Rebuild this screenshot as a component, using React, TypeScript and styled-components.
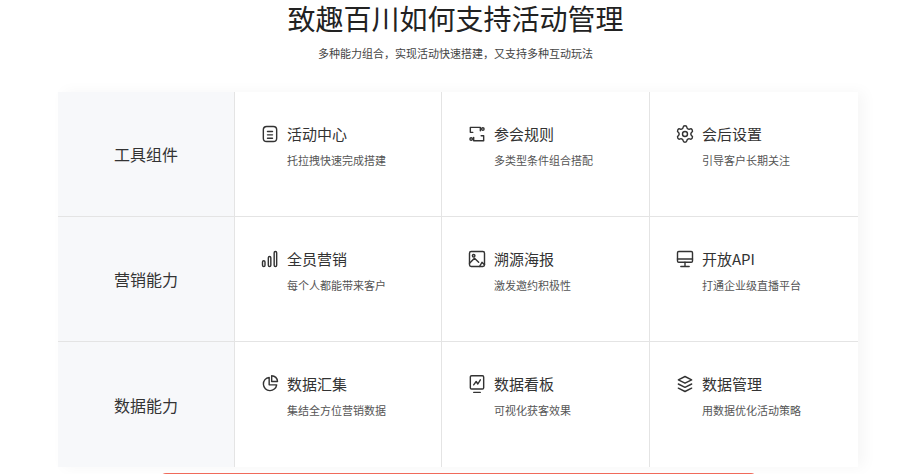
import styled, { createGlobalStyle } from "styled-components"
import { Settings } from "lucide-react"

const Global = createGlobalStyle`
  body { margin: 0; background: #fff; font-family: "Noto Sans CJK SC", "Noto Sans", sans-serif; }
`

const Ico = ({ children }: { children: React.ReactNode }) => (
  <svg width="20" height="20" viewBox="0 0 24 24" fill="none" stroke="#333" strokeWidth="1.7" strokeLinecap="round" strokeLinejoin="round">
    {children}
  </svg>
)

const icons: Record<string, React.ReactNode> = {
  doc: <Ico><rect x="4" y="3" width="16" height="18" rx="4" /><path d="M9 9h6M9 13h6M9 17h6" /></Ico>,
  rule: <Ico><path d="M8 4H4v6h3M16 20h4v-6h-3M8 4h8v4M16 20H8v-4" /><circle cx="19" cy="6" r="1.5" /><circle cx="5" cy="18" r="1.5" /></Ico>,
  gear: <Settings size={20} color="#333" strokeWidth={1.7} />,
  bars: <Ico><rect x="3" y="14" width="3" height="7" rx="1.5" /><rect x="10" y="9" width="3" height="12" rx="1.5" /><rect x="17" y="3" width="3" height="18" rx="1.5" /></Ico>,
  poster: <Ico><rect x="3" y="3" width="18" height="18" rx="2" /><circle cx="8" cy="8" r="1.5" /><path d="M3 17l6-6 5 5M15 21l3-5 3 3" /></Ico>,
  api: <Ico><rect x="3" y="3" width="18" height="13" rx="1.5" /><path d="M3 12h18M12 16v5M7 21h10" /></Ico>,
  pie: <Ico><path d="M11 4a8 8 0 1 0 9 9h-9z" /><path d="M14 2v7h7a7 7 0 0 0-7-7z" /></Ico>,
  board: <Ico><rect x="4" y="2" width="16" height="16" rx="1.5" /><path d="M8 13l3-4 2 3 3-5M8 22h8" /></Ico>,
  layers: <Ico><path d="M12 3l8 4-8 4-8-4z" /><path d="M4 12l8 4 8-4M4 17l8 4 8-4" /></Ico>,
}

const rows = [
  { name: "工具组件", items: [["doc", "活动中心", "托拉拽快速完成搭建"], ["rule", "参会规则", "多类型条件组合搭配"], ["gear", "会后设置", "引导客户长期关注"]] },
  { name: "营销能力", items: [["bars", "全员营销", "每个人都能带来客户"], ["poster", "溯源海报", "激发邀约积极性"], ["api", "开放API", "打通企业级直播平台"]] },
  { name: "数据能力", items: [["pie", "数据汇集", "集结全方位营销数据"], ["board", "数据看板", "可视化获客效果"], ["layers", "数据管理", "用数据优化活动策略"]] },
]

export default function App() {
  return (
    <Page>
      <Global />
      <Title>致趣百川如何支持活动管理</Title>
      <Sub>多种能力组合，实现活动快速搭建，又支持多种互动玩法</Sub>
      <Table>
        {rows.map((r, ri) => (
          <Row key={r.name} $last={ri === rows.length - 1}>
            <RowHead>{r.name}</RowHead>
            {r.items.map(([ic, t, d]) => (
              <Cell key={t}>
                <CellTitle>{icons[ic]}<span>{t}</span></CellTitle>
                <Desc>{d}</Desc>
              </Cell>
            ))}
          </Row>
        ))}
      </Table>
      <RedBar />
    </Page>
  )
}

const Page = styled.div`
  width: 911px;
  height: 474px;
  overflow: hidden;
  display: flex;
  flex-direction: column;
  align-items: center;
`

const Title = styled.h1`
  margin: 0;
  padding-top: 1px;
  font-size: 28px;
  line-height: 34px;
  font-weight: 400;
  color: #222;
`

const Sub = styled.p`
  margin: 10px 0 0;
  font-size: 11px;
  line-height: 16px;
  color: #444;
`

const Table = styled.div`
  margin: 31px 0 0 5px;
  width: 800px;
  box-shadow: 6px 0 14px rgba(0, 0, 0, 0.04);
`

const Row = styled.div<{ $last: boolean }>`
  display: grid;
  grid-template-columns: 176px 207px 208px 209px;
  height: 125px;
  border-bottom: ${p => (p.$last ? "none" : "1px solid #e4e4e4")};
  box-sizing: border-box;
`

const RowHead = styled.div`
  background: #f7f8fa;
  display: flex;
  align-items: center;
  justify-content: center;
  font-size: 16px;
  color: #333;
`

const Cell = styled.div`
  background: #fff;
  border-left: 1px solid #e4e4e4;
  padding: 32px 0 0 25px;
`

const CellTitle = styled.div`
  display: flex;
  align-items: center;
  gap: 7px;
  font-size: 15px;
  color: #333;
  line-height: 20px;
`

const Desc = styled.div`
  margin: 8px 0 0 27px;
  font-size: 11px;
  color: #555;
  line-height: 16px;
`

const RedBar = styled.div`
  margin: 6px 0 0 5px;
  width: 597px;
  height: 10px;
  flex-shrink: 0;
  background: #f06a5a;
  border-radius: 6px 6px 0 0;
`
